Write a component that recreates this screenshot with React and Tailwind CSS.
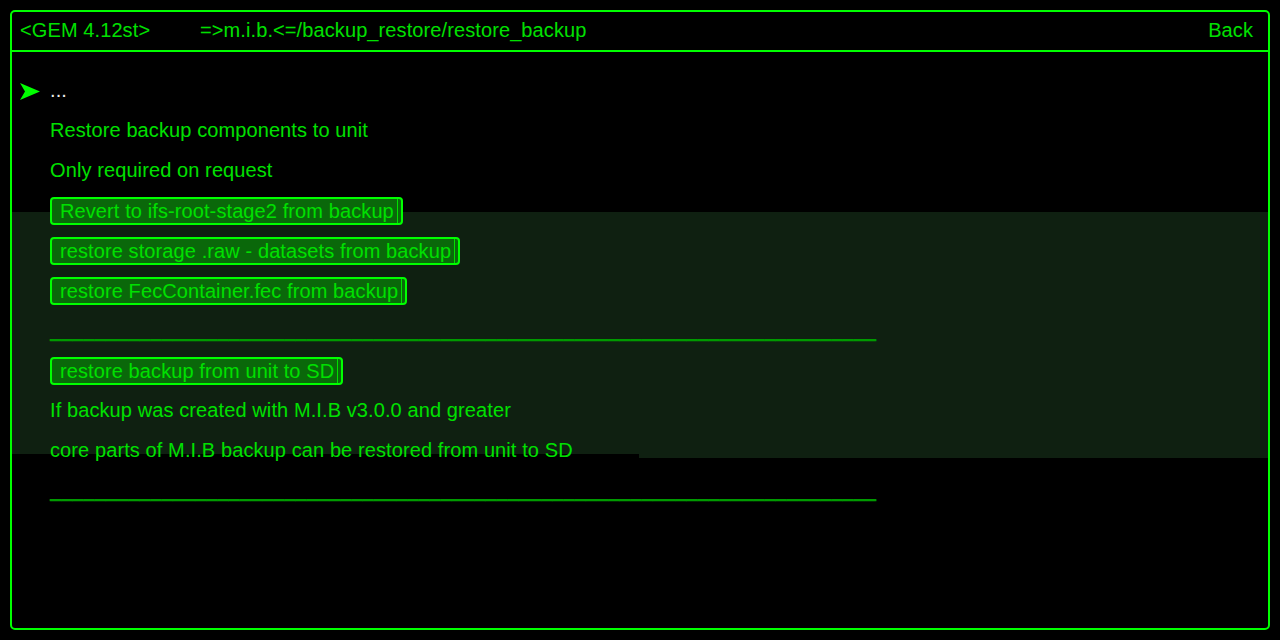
import React from "react";

const font = { fontFamily: '"Liberation Sans", Arial, sans-serif' };

function Btn({ children }) {
  return (
    <div className="flex h-[40px] items-center pt-[1px]">
      <div className="flex h-[28px] items-stretch rounded-[4px] border-2 border-[#00ff00] bg-[#0a680a] pl-[8px] pr-[3px]">
        <span className="flex items-center border-r border-[#00e000] pr-[3px] leading-none text-[#00e000]">
          {children}
        </span>
      </div>
    </div>
  );
}

function Line({ children, className = "" }) {
  return (
    <div className={"flex h-[40px] items-center text-[#00e000] " + className}>{children}</div>
  );
}

function Divider() {
  return (
    <div className="flex h-[40px] items-center tracking-[0.04px] text-[#009a00] [text-shadow:0_-1px_0_#009a00]">
      {"_".repeat(74)}
    </div>
  );
}

export default function App() {
  return (
    <div className="h-[640px] w-[1280px] overflow-hidden bg-black p-[10px] text-[20px] tracking-[0.1px]" style={font}>
      <div className="relative flex h-[620px] flex-col rounded-[5px] border-2 border-[#00ff00]">
        <div className="flex h-[40px] shrink-0 items-center border-b-2 border-[#00ff00] pb-[2px] pl-[8px] pr-[15px] text-[#00e000]">
          <span className="w-[180px]">&lt;GEM 4.12st&gt;</span>
          <span className="flex-1">=&gt;m.i.b.&lt;=/backup_restore/restore_backup</span>
          <span>Back</span>
        </div>
        <div className="relative flex-1">
          <div className="absolute left-0 right-0 top-[160px] h-[246px] bg-[#0f2011]" />
          <div className="absolute left-0 top-[402px] h-[4px] w-[627px] bg-black" />
          <div className="relative flex flex-col pt-[18px]">
            <div className="flex h-[40px] items-center">
              <div className="flex w-[38px] justify-end pt-[3px]">
                <svg width="20" height="17" viewBox="0 0 20 17" className="mr-[10px]">
                  <polygon points="0,0 20,8.5 0,17 5,8.5" fill="#00ff00" />
                </svg>
              </div>
              <span className="text-[#eeeeee]">...</span>
            </div>
            <div className="flex flex-col pl-[38px]">
              <Line>Restore backup components to unit</Line>
              <Line>Only required on request</Line>
              <Btn>Revert to ifs-root-stage2 from backup</Btn>
              <Btn>restore storage .raw - datasets from backup</Btn>
              <Btn>restore FecContainer.fec from backup</Btn>
              <Divider />
              <Btn>restore backup from unit to SD</Btn>
              <Line>If backup was created with M.I.B v3.0.0 and greater</Line>
              <Line>core parts of M.I.B backup can be restored from unit to SD</Line>
              <Divider />
            </div>
          </div>
        </div>
      </div>
    </div>
  );
}
